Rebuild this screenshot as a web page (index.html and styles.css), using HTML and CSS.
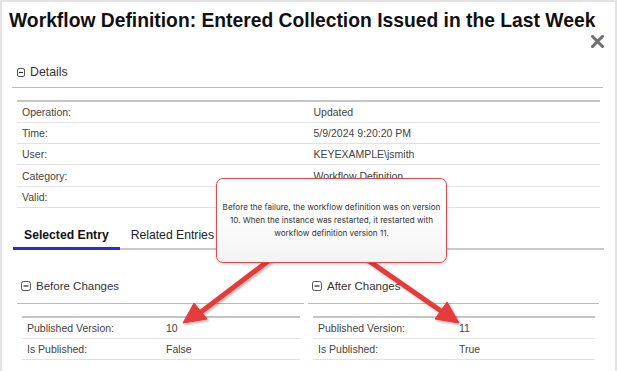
FILE: index.html
```html
<!DOCTYPE html>
<html lang="en">
<head>
  <meta charset="UTF-8">
  <title>Workflow Definition</title>
  <link rel="stylesheet" href="styles.css">
</head>
<body>
  <div class="dialog">
    <h1 class="title">Workflow Definition: Entered Collection Issued in the Last Week</h1>
    <div class="close-row">
      <svg class="close" width="13" height="13" viewBox="0 0 13 13"><path d="M1.5 1.5 L11.5 11.5 M11.5 1.5 L1.5 11.5" stroke="#6f6f6f" stroke-width="3" stroke-linecap="square"/></svg>
    </div>

    <section class="panel">
      <div class="panel-head -small">
        <svg class="toggle" width="8" height="9" viewBox="0 0 8 9"><rect x="0.5" y="0.5" width="7" height="8" rx="1.5" fill="#fff" stroke="#555"/><path d="M2 4.5 H6" stroke="#333" stroke-width="1.2"/></svg>
        Details
      </div>
      <table class="props -details">
        <tr><td>Operation:</td><td>Updated</td></tr>
        <tr><td>Time:</td><td>5/9/2024 9:20:20 PM</td></tr>
        <tr><td>User:</td><td>KEYEXAMPLE\jsmith</td></tr>
        <tr><td>Category:</td><td>Workflow Definition</td></tr>
        <tr><td>Valid:</td><td></td></tr>
      </table>
    </section>

    <div class="tabs">
      <span class="tab -active">Selected Entry</span>
      <span class="tab">Related Entries</span>
    </div>

    <div class="changes">
      <section class="panel">
        <div class="panel-head">
          <svg class="toggle" width="10" height="10" viewBox="0 0 10 10"><rect x="0.5" y="0.5" width="9" height="9" rx="2" fill="#fff" stroke="#555"/><path d="M2.5 5 H7.5" stroke="#333" stroke-width="1.3"/></svg>
          Before Changes
        </div>
        <table class="props">
          <tr><td>Published Version:</td><td>10</td></tr>
          <tr><td>Is Published:</td><td>False</td></tr>
        </table>
      </section>
      <section class="panel">
        <div class="panel-head">
          <svg class="toggle" width="10" height="10" viewBox="0 0 10 10"><rect x="0.5" y="0.5" width="9" height="9" rx="2" fill="#fff" stroke="#555"/><path d="M2.5 5 H7.5" stroke="#333" stroke-width="1.3"/></svg>
          After Changes
        </div>
        <table class="props">
          <tr><td>Published Version:</td><td>11</td></tr>
          <tr><td>Is Published:</td><td>True</td></tr>
        </table>
      </section>
    </div>

    <!-- annotation overlay -->
    <svg class="arrows" width="617" height="371" viewBox="0 0 617 371">
      <defs>
        <filter id="shade" x="-20%" y="-20%" width="140%" height="140%">
          <feDropShadow dx="1.5" dy="1.5" stdDeviation="1" flood-color="#000" flood-opacity="0.3"/>
        </filter>
      </defs>
      <g fill="#e53b3b" stroke="#e53b3b" filter="url(#shade)">
        <path d="M280 252 L201 312" stroke-width="5" fill="none"/>
        <polygon points="183,323 194,303 207,319" stroke-width="1" stroke-linejoin="round"/>
        <path d="M356 252 L441 311" stroke-width="5" fill="none"/>
        <polygon points="459,323 435,319 447,302" stroke-width="1" stroke-linejoin="round"/>
      </g>
    </svg>
    <div class="callout">
      Before the failure, the workflow definition was on version
      10. When the instance was restarted, it restarted with
      workflow definition version 11.
    </div>
  </div>
</body>
</html>
```

FILE: styles.css
```css
*, *::before, *::after {
  box-sizing: border-box;
}
body {
  margin: 0;
  background: #fff;
}
.dialog {
  position: relative;
  width: 617px;
  height: 371px;
  overflow: hidden;
  border: 2px solid #e3e3e3;
  border-bottom: none;
  padding: 8px 12px 0 10px;
  font-family: "Liberation Sans", Arial, sans-serif;
  color: #444;
}
.title {
  margin: 0 0 0 -3px;
  font-size: 19.3px;
  line-height: 22px;
  font-weight: bold;
  color: #111;
  white-space: nowrap;
}
.close-row {
  display: flex;
  justify-content: flex-end;
  margin: 1px -1px 0 0;
  height: 16px;
}
.close {
  display: block;
  margin-top: 2px;
}
.panel-head {
  display: flex;
  align-items: center;
  gap: 5px;
  font-size: 11.5px;
  color: #333;
  height: 31px;
  padding-left: 4px;
  border-bottom: 1.5px solid #b4b4f2;
}
.panel-head.-small {
  font-size: 12.3px;
  height: 34px;
  margin-top: 5px;
  padding-top: 3px;
  padding-left: 5px;
}
.toggle {
  display: block;
  flex: none;
}
.props {
  border-collapse: collapse;
  border-top: 2px solid #c6c6c6;
  font-size: 10.5px;
  color: #444;
}
.props td {
  width: 50%;
  height: 21px;
  padding: 0 5px;
  border-bottom: 1.5px solid #e2e2e2;
  white-space: nowrap;
}
.props.-details {
  width: 583px;
  margin: 12px 0 0 5px;
}
.props.-details td {
  height: 21.3px;
}
.tabs {
  display: flex;
  margin: 15px -1px 0 1px;
  border-bottom: 2px solid #c9c9c9;
}
.tab {
  padding: 0 11px;
  height: 27px;
  line-height: 25px;
  font-size: 12.2px;
  color: #222;
  margin-bottom: -2px;
  border-bottom: 3px solid transparent;
}
.tab.-active {
  font-weight: bold;
  color: #111;
  border-bottom-color: #2b2bd4;
}
.changes {
  display: grid;
  grid-template-columns: 287px 291px;
  gap: 4px;
  margin: 21px 0 0 5px;
}
.changes .panel-head {
  height: 33px;
  padding-bottom: 1px;
}
.changes .props {
  width: calc(100% - 9px);
  margin: 12px 0 0 5px;
}
.changes .props td {
  height: 21.3px;
}
.arrows {
  position: absolute;
  left: -2px;
  top: -2px;
}
.callout {
  position: absolute;
  left: 214px;
  top: 176px;
  width: 231px;
  height: 85px;
  display: flex;
  align-items: center;
  justify-content: center;
  text-align: center;
  padding: 0 4px;
  border: 1px solid #e24a4a;
  border-radius: 7px;
  background: linear-gradient(#fff 40%, #f3f3f3);
  box-shadow: 0 1px 3px rgba(0, 0, 0, 0.2);
  font-family: Inter, "Noto Sans", sans-serif;
  font-size: 8.1px;
  line-height: 13px;
  color: #333;
}
```
